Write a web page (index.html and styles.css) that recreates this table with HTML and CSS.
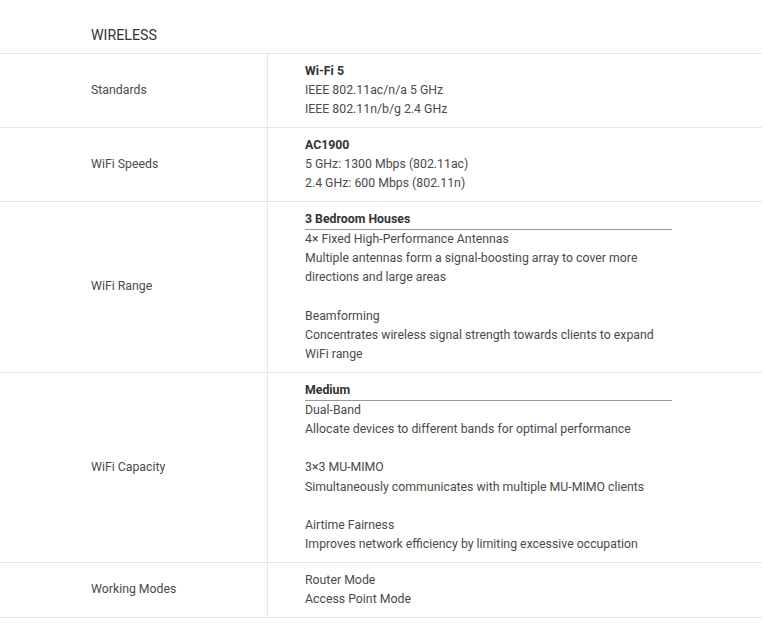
FILE: index.html
```html
<!DOCTYPE html>
<html lang="en">
<head>
<meta charset="utf-8">
<title>Wireless Specs</title>
<link rel="stylesheet" href="styles.css">
</head>
<body>
<section class="spec">
  <h2 class="spec-title">WIRELESS</h2>
  <div class="spec-table">
    <div class="row">
      <div class="label">Standards</div>
      <div class="value">
        <div class="strong">Wi-Fi 5</div>
        <div>IEEE 802.11ac/n/a 5 GHz</div>
        <div>IEEE 802.11n/b/g 2.4 GHz</div>
      </div>
    </div>
    <div class="row">
      <div class="label">WiFi Speeds</div>
      <div class="value">
        <div class="strong">AC1900</div>
        <div>5 GHz: 1300 Mbps (802.11ac)</div>
        <div>2.4 GHz: 600 Mbps (802.11n)</div>
      </div>
    </div>
    <div class="row">
      <div class="label">WiFi Range</div>
      <div class="value">
        <div class="strong ruled">3 Bedroom Houses</div>
        <div>4× Fixed High-Performance Antennas</div>
        <div>Multiple antennas form a signal-boosting array to cover more directions and large areas</div>
        <div class="blank">&nbsp;</div>
        <div>Beamforming</div>
        <div>Concentrates wireless signal strength towards clients to expand WiFi range</div>
      </div>
    </div>
    <div class="row">
      <div class="label">WiFi Capacity</div>
      <div class="value">
        <div class="strong ruled">Medium</div>
        <div>Dual-Band</div>
        <div>Allocate devices to different bands for optimal performance</div>
        <div class="blank">&nbsp;</div>
        <div>3×3 MU-MIMO</div>
        <div>Simultaneously communicates with multiple MU-MIMO clients</div>
        <div class="blank">&nbsp;</div>
        <div>Airtime Fairness</div>
        <div>Improves network efficiency by limiting excessive occupation</div>
      </div>
    </div>
    <div class="row">
      <div class="label">Working Modes</div>
      <div class="value">
        <div>Router Mode</div>
        <div>Access Point Mode</div>
      </div>
    </div>
  </div>
</section>
</body>
</html>
```

FILE: styles.css
```css
html, body {
  margin: 0;
  padding: 0;
  background: #ffffff;
}
body {
  font-family: Roboto, "Liberation Sans", Arial, sans-serif;
  font-size: 12.3px;
  line-height: 19.2px;
  color: #4a4a4a;
}
.spec {
  width: 762px;
}
.spec-title {
  margin: 0;
  height: 53px;
  box-sizing: border-box;
  padding: 27px 0 0 91px;
  font-size: 14.2px;
  font-weight: 400;
  color: #333333;
  line-height: 17px;
}
.spec-table {
  border-top: 1px solid #e6e6e6;
}
.row {
  display: grid;
  grid-template-columns: 268px 1fr;
  border-bottom: 1px solid #e6e6e6;
}
.label {
  display: flex;
  align-items: center;
  padding-left: 91px;
  border-right: 1px solid #e6e6e6;
  color: #4a4a4a;
}
.value {
  padding: 7.7px 0 7.7px 37px;
  max-width: 367px;
  color: #4a4a4a;
}
.strong {
  font-weight: 700;
  color: #333333;
}
.ruled {
  border-bottom: 1px solid #999999;
}
```
